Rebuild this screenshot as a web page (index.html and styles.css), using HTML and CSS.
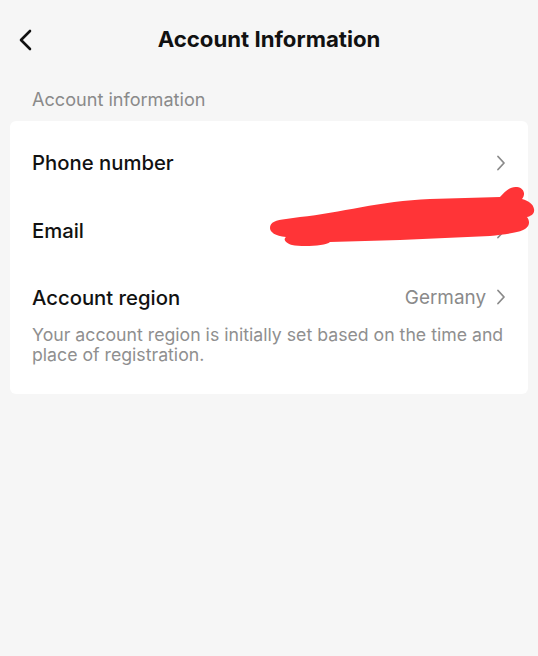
FILE: index.html
```html
<!DOCTYPE html>
<html lang="en">
<head>
<meta charset="utf-8">
<title>Account Information</title>
<link rel="stylesheet" href="styles.css">
</head>
<body>
<div class="page">
  <header class="header">
    <button class="back" aria-label="Back">
      <svg width="14" height="22" viewBox="0 0 14 22"><path d="M12 2 L3 11 L12 20" fill="none" stroke="#111" stroke-width="2.6" stroke-linecap="round" stroke-linejoin="round"/></svg>
    </button>
    <h1 class="title">Account Information</h1>
  </header>
  <div class="section-label">Account information</div>
  <div class="card">
    <div class="row">
      <span class="label">Phone number</span>
      <span class="value"><svg class="chev" width="10" height="16" viewBox="0 0 10 16"><path d="M2 1.5 L8 8 L2 14.5" fill="none" stroke="#8a8a8a" stroke-width="1.8" stroke-linecap="round" stroke-linejoin="round"/></svg></span>
    </div>
    <div class="row">
      <span class="label">Email</span>
      <span class="value"><svg class="chev" width="10" height="16" viewBox="0 0 10 16"><path d="M2 1.5 L8 8 L2 14.5" fill="none" stroke="#8a8a8a" stroke-width="1.8" stroke-linecap="round" stroke-linejoin="round"/></svg></span>
    </div>
    <div class="row region">
      <span class="label">Account region</span>
      <span class="value"><span class="country">Germany</span><svg class="chev" width="10" height="16" viewBox="0 0 10 16"><path d="M2 1.5 L8 8 L2 14.5" fill="none" stroke="#8a8a8a" stroke-width="1.8" stroke-linecap="round" stroke-linejoin="round"/></svg></span>
    </div>
    <p class="desc">Your account region is initially set based on the time and place of registration.</p>
  </div>
  <svg class="redact" width="538" height="656" viewBox="0 0 538 656" aria-hidden="true">
    <path fill="#ff3437" d="M270,228 C270,222 276,220 286,219 L300,217 C340,213 380,201 430,199 L500,197 C505,192 510,186 517,187 C524,188 526,194 522,199 C529,201 533,204 534,209 C535,214 531,216 527,217 C530,221 530,226 525,229 C519,233 505,234 490,236 L400,240 L330,242 C326,246 302,247 292,245 C285,243 283,239 286,237 C275,236 270,232 270,228 Z"/>
  </svg>
</div>
</body>
</html>
```
FILE: styles.css
```css
html, body {
  margin: 0;
  padding: 0;
  background: #f6f6f6;
}
body {
  font-family: "Inter", "Roboto", "Liberation Sans", sans-serif;
  color: #111;
}
.page {
  position: relative;
  width: 538px;
  height: 656px;
  overflow: hidden;
}
.header {
  position: relative;
  height: 80px;
  display: flex;
  align-items: center;
  justify-content: center;
}
.back {
  position: absolute;
  left: 18px;
  top: 29px;
  border: 0;
  background: none;
  padding: 0;
  display: flex;
}
.title {
  margin: 0;
  font-size: 22.2px;
  font-weight: 700;
  position: relative;
  top: -2px;
}
.section-label {
  padding: 0 32px;
  height: 41px;
  line-height: 39px;
  font-size: 18.1px;
  color: #8a8a8a;
}
.card {
  margin: 0 10px;
  background: #fff;
  border-radius: 6px;
  padding: 8px 0 29px;
}
.row {
  height: 68px;
  box-sizing: border-box;
  padding: 0 22px 1px;
  display: flex;
  align-items: center;
  justify-content: space-between;
}
.row.region {
  height: 60px;
  padding-top: 5px;
}
.label {
  font-size: 20.3px;
  font-weight: 500;
  color: #111;
}
.value {
  display: flex;
  align-items: center;
  gap: 10px;
  color: #8a8a8a;
  font-size: 18.9px;
}
.chev {
  display: block;
}
.desc {
  margin: 0;
  padding: 0 12px 0 22px;
  font-size: 17.7px;
  line-height: 20px;
  color: #8f8f8f;
}
.redact {
  position: absolute;
  left: 0;
  top: 0;
  pointer-events: none;
}
```
